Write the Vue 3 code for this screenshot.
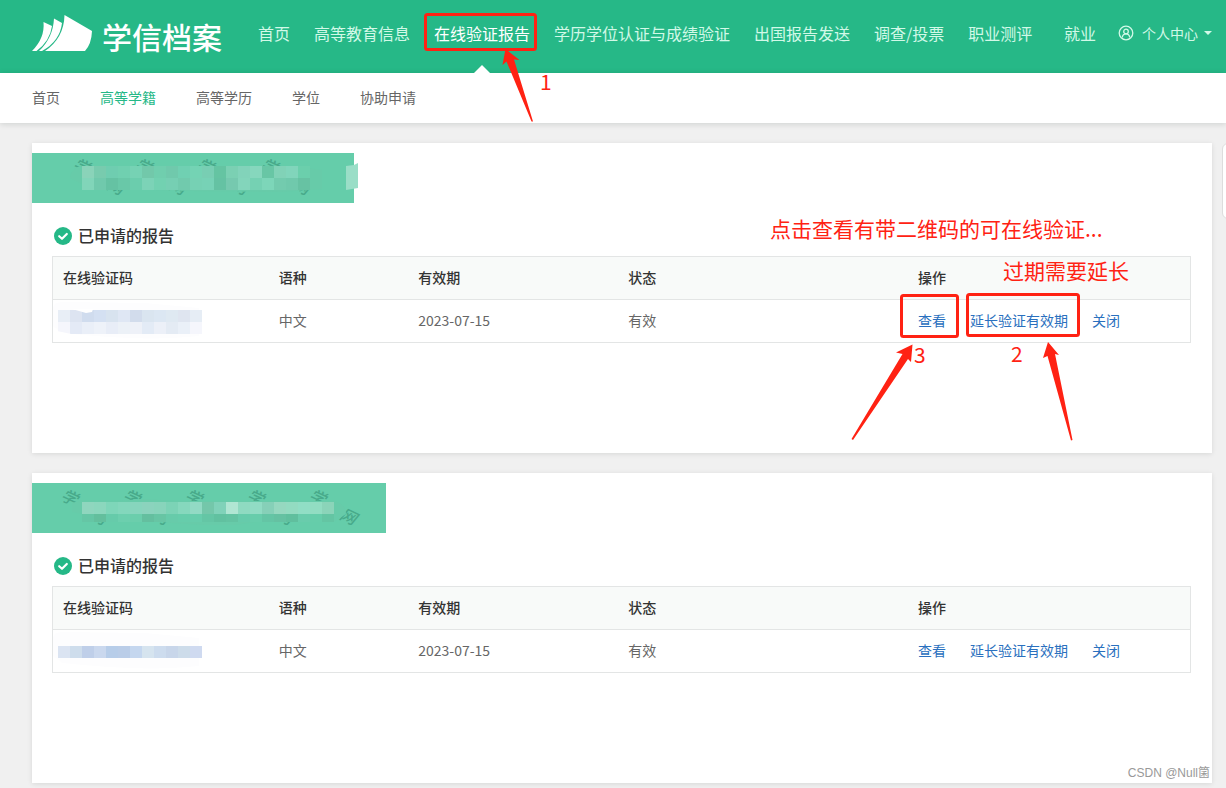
<script setup>
const mainNav = [
  { label: '首页' },
  { label: '高等教育信息' },
  { label: '在线验证报告', active: true },
  { label: '学历学位认证与成绩验证' },
  { label: '出国报告发送' },
  { label: '调查/投票' },
  { label: '职业测评' },
]

const subNav = [
  { label: '首页' },
  { label: '高等学籍', active: true },
  { label: '高等学历' },
  { label: '学位' },
  { label: '协助申请' },
]

const columns = ['在线验证码', '语种', '有效期', '状态', '操作']

const reports = [
  {
    id: 'first',
    width: 326,
    fill: 322,
    top: 13,
    marks: [
      { x: 49, y: 14, t: '学' }, { x: 111, y: 14, t: '学' }, { x: 173, y: 14, t: '学' }, { x: 237, y: 14, t: '学' },
      { x: 83, y: 34, t: '网' }, { x: 145, y: 34, t: '网' }, { x: 207, y: 34, t: '网' }, { x: 269, y: 34, t: '网' },
    ],
    cover: 'M38 24Q40 14 50 13H98L128 17H146L172 13L196 14L220 17L268 14L290 17V36L250 39L160 38L120 37H96L76 34L50 37V31L38 25Z',
    cells: [
      ['#8ad3b9', '#78cbae', '#6fcdb0', '#70d0b0', '#76d2b4', '#72c8aa', '#70ceae', '#70c9ac', '#70d0b2', '#74d3b4', '#78ceb3', '#65c4a2', '#7bd0b3', '#82d3ba', '#86d7bd', '#68c6a5', '#81d2b7', '#81d5bb', '#6bcfac'],
      ['#81d5b9', '#70c9ac', '#65c2a3', '#69c8a8', '#6bcdad', '#7cd3b7', '#72d1b1', '#76cfb3', '#71caad', '#76d1b4', '#77d2b6', '#65c2a3', '#76c9af', '#83d5bb', '#75d1b3', '#7dd6b9', '#73cbae', '#70c9ac', '#67c2a3'],
    ],
    code: [
      ['#e8eef6', '#dde4f1', '#d0dcee', '#d4e0f2', '#d8e3ef', '#dfe7f4', '#d2dcec', '#dae5f0', '#dce7f3', '#dfe9f2', '#dfe5f0', '#e6edf5'],
      ['#f5f6fc', '#e4eaf6', '#eaeff8', '#eef2f9', '#e8edf7', '#ecf1f7', '#eef1f8', '#e3ebf6', '#ecf0f8', '#e4ebf4', '#eaf0f8', '#f5f6fc'],
    ],
    codeTop: 10,
    annotated: true,
  },
  {
    id: 'second',
    width: 354,
    fill: 354,
    top: 19,
    marks: [
      { x: 37, y: 15, t: '学' }, { x: 99, y: 15, t: '学' }, { x: 161, y: 15, t: '学' }, { x: 223, y: 15, t: '学' }, { x: 285, y: 15, t: '学' },
      { x: 66, y: 34, t: '网' }, { x: 128, y: 34, t: '网' }, { x: 190, y: 34, t: '网' }, { x: 252, y: 34, t: '网' }, { x: 316, y: 34, t: '网' },
    ],
    cover: 'M40 29V20L50 17L82 18L112 16L146 18L170 18L302 18Q314 21 314 31L302 39L240 37L202 42H172L140 40L110 37L50 37V31Z',
    cells: [
      ['#8fd6be', '#8bd7bd', '#7ed6b9', '#83d7bc', '#87d5bd', '#8bd3bd', '#88d4bb', '#7cd3b6', '#86d8bd', '#92dac4', '#74c7aa', '#80d2b9', '#b0e6d3', '#8fdac1', '#91dcc4', '#86d0b8', '#96d8c0', '#93dbc1', '#91dec5', '#92ddc2', '#8bd4b9'],
      ['#65c6a5', '#63bf9d', '#66cbaa', '#6ccfae', '#6bceac', '#64bf9f', '#67c5a4', '#67cbaa', '#66cdab', '#67cdac', '#64c6a5', '#61c1a0', '#63c3a2', '#66cbab', '#67cdab', '#64c5a5', '#65c1a2', '#60bf9e', '#69ccac', '#66cdaa', '#64c5a3'],
    ],
    code: [
      ['#dbe4f2', '#ceddec', '#bfcfe9', '#cad8ee', '#b7cde9', '#bacde8', '#c5d7ef', '#d6e4ef', '#cddcee', '#c8d6ea', '#cddcea', '#cfdaf0'],
    ],
    codeTop: 16,
    annotated: false,
  },
]
</script>

<template>
  <div class="page">
    <header class="header">
      <a class="brand" href="#">
        <svg class="brand-mark" width="60" height="36" viewBox="32 15 60 36" aria-hidden="true">
          <path d="M64.500 15L92 31Q91.500 44 85 51H45Q64 38 64.500 15Z" />
          <path d="M54 18.500L62 23Q60 41 42 51H39Q53 38 54 18.500Z" />
          <path d="M43.500 22L52 26Q50 41 36.500 51H32Q45 38 43.500 22Z" />
        </svg>
        <span class="brand-name">学信档案</span>
      </a>
      <nav class="main-nav" aria-label="主导航">
        <a v-for="item in mainNav" :key="item.label" href="#" :class="{ active: item.active }">
          {{ item.label }}
          <svg v-if="item.active" class="nav-note" width="140" height="120" viewBox="420 8 140 120">
            <rect x="425.500" y="14.500" width="110" height="35" rx="2" class="frame" />
            <path d="M505.500 49L519.500 60L514 59.500L533 121.500H531.500L506.500 61.500L502.500 65Z" />
            <text x="540" y="90">1</text>
          </svg>
        </a>
      </nav>
      <div class="account">
        <a href="#">就业</a>
        <button type="button" class="account-menu">
          <svg width="16" height="16" viewBox="0 0 16 16" aria-hidden="true">
            <circle cx="8" cy="8" r="6.800" />
            <circle cx="8" cy="6.500" r="2.300" />
            <path d="M4.300 12.300Q4.800 8.900 8 8.900T11.700 12.300" />
          </svg>
          <span>个人中心</span>
          <i class="caret"></i>
        </button>
      </div>
    </header>

    <nav class="sub-nav" aria-label="子导航">
      <a v-for="item in subNav" :key="item.label" href="#" :class="{ active: item.active }">{{ item.label }}</a>
    </nav>

    <main class="content">
      <section v-for="report in reports" :key="report.id" class="card">
        <svg class="banner" :width="report.width" height="50" aria-hidden="true">
          <rect :width="report.fill" height="50" fill="#65cdaa" />
          <text
            v-for="mark in report.marks"
            :key="mark.x"
            :transform="`translate(${mark.x} ${mark.y}) rotate(25)`"
            y="5"
            class="mark"
          >{{ mark.t }}</text>
          <path :d="report.cover" fill="#67cba9" />
          <g v-for="(row, r) in report.cells" :key="r">
            <rect
              v-for="(color, c) in row"
              :key="c"
              :x="50 + c * 12"
              :y="report.top + r * 12"
              width="12"
              :height="report.annotated || r === 0 ? 12 : 8"
              :fill="color"
            />
          </g>
          <path v-if="report.annotated" d="M314 13L322 12L326 10V35L314 37Z" fill="#9adec7" />
        </svg>
        <div class="report">
          <h2>
            <svg width="18" height="18" viewBox="0 0 18 18" aria-hidden="true">
              <circle cx="9" cy="9" r="9" fill="#25b887" />
              <path d="M5.200 9.200L8 11.800L12.800 7" fill="none" stroke="#fff" stroke-width="2.200" stroke-linecap="round" stroke-linejoin="round" />
            </svg>
            <span>已申请的报告</span>
          </h2>
          <table>
            <thead>
              <tr>
                <th v-for="column in columns" :key="column" scope="col">{{ column }}</th>
              </tr>
            </thead>
            <tbody>
              <tr>
                <td class="code-cell">
                  <svg width="150" height="42" aria-hidden="true">
                    <path d="M0 8Q1 2 9 2L92 3L146 8V36Q90 42 10 33L0 26Z" fill="#fdfdfe" />
                    <g v-for="(row, r) in report.code" :key="r">
                      <rect
                        v-for="(color, c) in row"
                        :key="c"
                        :x="5 + c * 12"
                        :y="report.codeTop + r * 12"
                        width="12"
                        height="12"
                        :fill="color"
                      />
                    </g>
                    <path v-if="report.annotated" d="M19 9L33 13L39 12L40 9ZM4 31L23 35H4Z" fill="#fff" />
                  </svg>
                </td>
                <td>中文</td>
                <td>2023-07-15</td>
                <td>有效</td>
                <td>
                  <div class="actions">
                    <a href="#">查看</a>
                    <a href="#">延长验证有效期</a>
                    <a href="#">关闭</a>
                    <svg v-if="report.annotated" class="action-note" width="370" height="240" viewBox="772 210 370 240">
                      <text x="771" y="237">点击查看有带二维码的可在线验证...</text>
                      <text x="1004" y="279">过期需要延长</text>
                      <rect x="902.500" y="295.500" width="56" height="41" rx="2" class="frame" />
                      <rect x="968.500" y="294.500" width="111" height="41" rx="2" class="frame" />
                      <text x="915" y="363">3</text>
                      <text x="1012" y="362">2</text>
                      <path d="M913.500 344.500L897 352.500L903.500 354L852.500 439L854 440L909 359L912 362Z" />
                      <path d="M1049 342L1044 358L1048.500 356L1072 440.500L1073.500 440L1056 354L1060 355Z" />
                    </svg>
                  </div>
                </td>
              </tr>
            </tbody>
          </table>
        </div>
      </section>
    </main>

    <aside class="side-panel"></aside>
    <div class="watermark">CSDN @Null箘</div>
  </div>
</template>

<style>
body {
  margin: 0;
  background: #f0f0f0;
}
</style>

<style scoped>
.page {
  position: relative;
  overflow: hidden;
  min-height: 100vh;
  box-sizing: border-box;
  font-family: "Noto Sans CJK SC", sans-serif;
  font-size: 14px;
  line-height: 20px;
  color: #666;
}

a {
  color: inherit;
  text-decoration: none;
  white-space: nowrap;
}

.header {
  display: flex;
  height: 73px;
  box-sizing: border-box;
  padding: 0 14px 0 32px;
  background: #26b887;
  color: #d2f9e8;
  font-size: 16px;
  line-height: 66px;
}

.brand {
  display: flex;
  gap: 10px;
  width: 226px;
  flex: none;
}

.brand-mark {
  margin-top: 15px;
  fill: #fff;
}

.brand-name {
  color: #fff;
  font-size: 30px;
  font-weight: 500;
  line-height: 72px;
}

.main-nav {
  display: flex;
  gap: 24px;
}

.main-nav a {
  position: relative;
}

.main-nav .active {
  color: #fff;
}

.main-nav .active::after {
  content: "";
  position: absolute;
  bottom: 0;
  left: 50%;
  margin-left: -8px;
  border: 8px solid transparent;
  border-top: 0;
  border-bottom-color: #fff;
}

.nav-note,
.action-note {
  position: absolute;
  z-index: 2;
  overflow: visible;
  pointer-events: none;
  fill: #ff2213;
  font-size: 21px;
}

.nav-note {
  top: 8px;
  left: -14px;
}

.action-note {
  top: -100px;
  left: -147px;
}

.frame {
  fill: none;
  stroke: #ff2213;
  stroke-width: 3px;
}

.account {
  display: flex;
  gap: 22px;
  margin-left: auto;
}

.account-menu {
  display: flex;
  align-items: center;
  height: 66px;
  padding: 0;
  border: 0;
  background: none;
  color: inherit;
  font: inherit;
  font-size: 14px;
}

.account-menu svg {
  margin-right: 8px;
  fill: none;
  stroke: currentColor;
  stroke-width: 1.3px;
}

.caret {
  margin-left: 6px;
  border: 4px solid transparent;
  border-top-color: currentColor;
  border-bottom: 0;
}

.sub-nav {
  display: flex;
  gap: 40px;
  padding: 0 32px 2px;
  background: #fff;
  line-height: 48px;
  box-shadow: 0 1px 6px rgba(0, 30, 20, 0.15);
}

.sub-nav .active {
  color: #25b887;
}

.content {
  display: grid;
  gap: 20px;
  padding: 20px 14px 5px 32px;
}

.card {
  box-sizing: border-box;
  min-height: 310px;
  padding-top: 10px;
  background: #fff;
  box-shadow: 0 1px 5px rgba(0, 20, 10, 0.1);
}

.banner {
  display: block;
  overflow: visible;
}

.mark {
  fill: #48aa8a;
  font-size: 16px;
  font-style: italic;
  font-weight: 500;
  text-anchor: middle;
}

.report {
  padding: 20px 21px 0 20px;
}

h2 {
  display: flex;
  align-items: center;
  gap: 6px;
  margin: 0 0 7px;
  padding-left: 2px;
  color: #333;
  font-size: 16px;
  font-weight: 500;
  line-height: 24px;
  height: 26px;
}

h2 span {
  padding-bottom: 2px;
}

table {
  width: 100%;
  table-layout: fixed;
  border-collapse: collapse;
  border: 1px solid #e3e5e5;
}

th,
td {
  height: 40px;
  padding: 0 10px 2px;
  text-align: left;
}

th {
  background: #f8faf9;
  color: #333;
  font-weight: 500;
}

th:nth-child(1) {
  width: 17.2%;
}

th:nth-child(2) {
  width: 10.5%;
}

th:nth-child(3) {
  width: 16.7%;
}

th:nth-child(4) {
  width: 23.7%;
}

tr {
  border-bottom: 1px solid #e3e5e5;
}

.code-cell {
  padding: 0;
}

.code-cell svg {
  display: block;
}

.actions {
  position: relative;
  display: flex;
  gap: 24px;
  color: #2a70be;
}

.side-panel {
  position: absolute;
  top: 143px;
  right: -40px;
  width: 42px;
  height: 74px;
  border: 1px solid #ddd;
  border-radius: 6px;
  background: #fff;
}

.watermark {
  position: absolute;
  right: 16px;
  bottom: 5px;
  color: #999;
  font-family: "Liberation Sans", "Noto Sans CJK SC", sans-serif;
  font-size: 12px;
}
</style>
